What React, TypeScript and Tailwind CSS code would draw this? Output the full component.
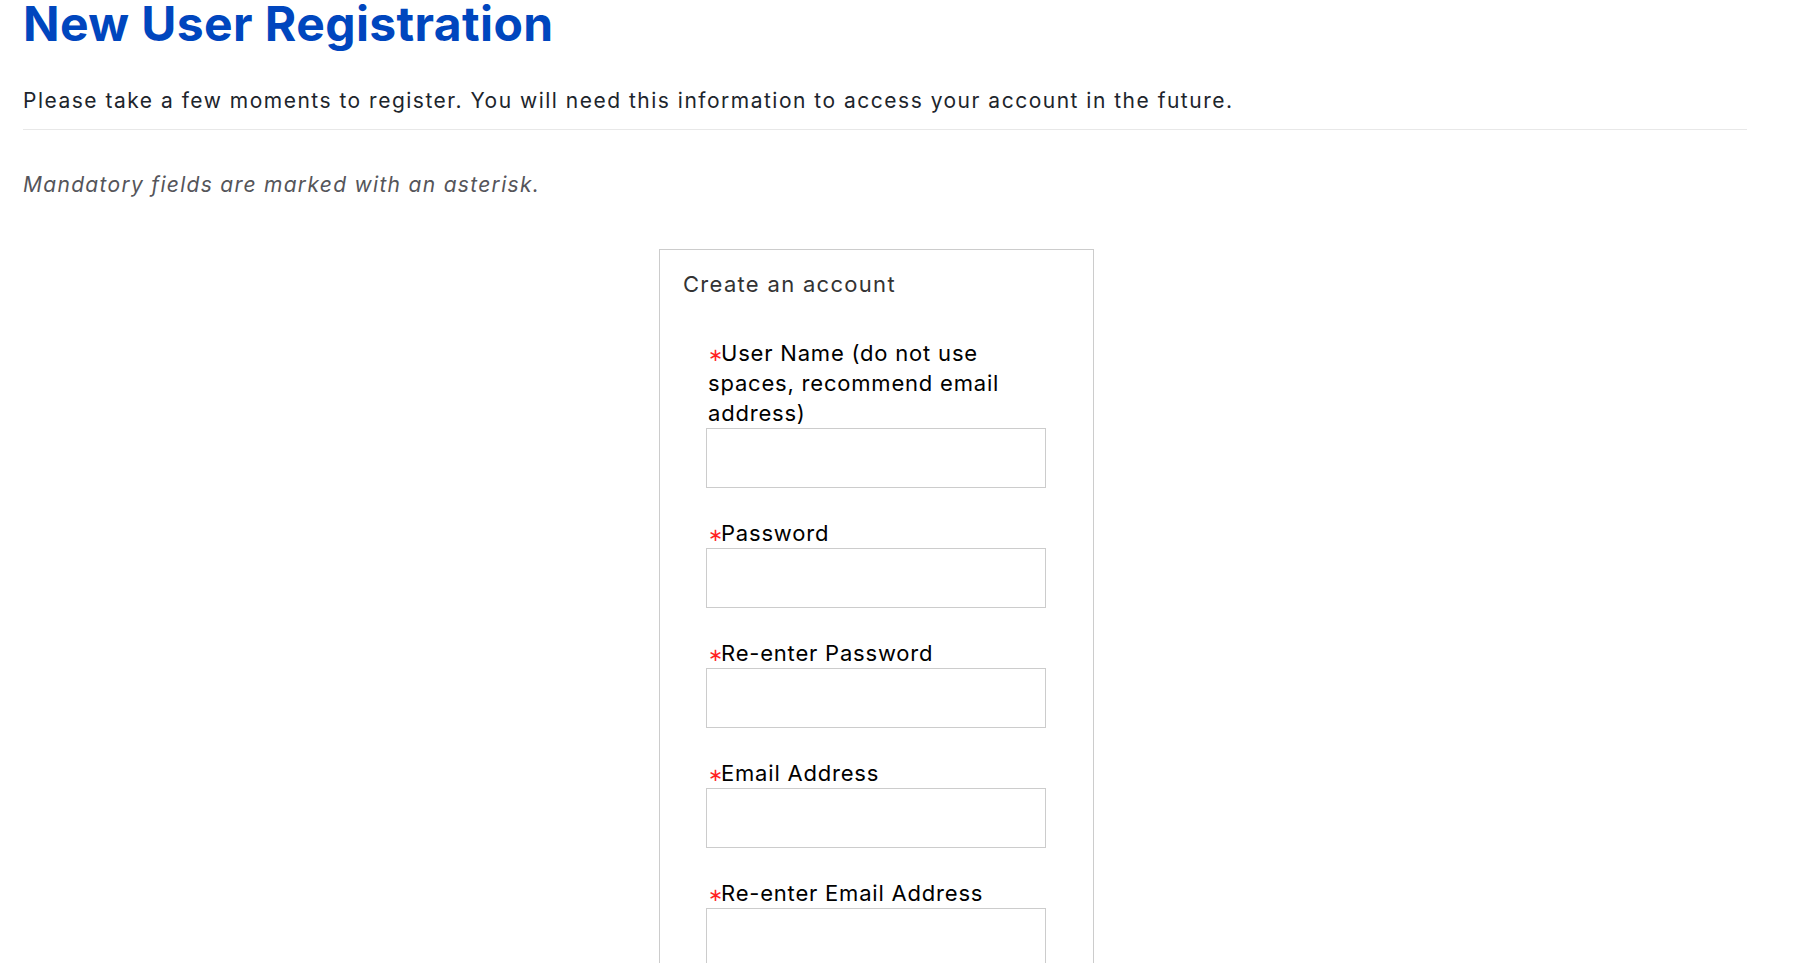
export default function App() {
  const fields = [
    { id: "username", label: "User Name (do not use spaces, recommend email address)", type: "text" },
    { id: "password", label: "Password", type: "password" },
    { id: "password2", label: "Re-enter Password", type: "password" },
    { id: "email", label: "Email Address", type: "email" },
    { id: "email2", label: "Re-enter Email Address", type: "email" },
  ];

  return (
    <div className="min-h-screen bg-white font-['Inter',sans-serif] text-[#1d252c]">
      <div className="pl-[23px] pr-[52px]">
        <h1 className="text-[48px] leading-[48px] font-bold tracking-[0.4px] text-[#0046be]">
          New User Registration
        </h1>

        <p className="mt-[39px] pb-[14px] text-[21px] leading-[28px] tracking-[1.5px] border-b border-[#e8e8e8]">
          Please take a few moments to register. You will need this information to access your account in the future.
        </p>

        <p className="mt-[41px] text-[21px] leading-[28px] tracking-[1.3px] italic text-[#55555a]">
          Mandatory fields are marked with an asterisk.
        </p>

        {/* Registration box */}
        <div className="mt-[50px] ml-[636px] w-[435px] border border-[#cccccc] pt-[20px] pb-[40px]">
          <h2 className="pl-[23px] text-[22px] leading-[28px] tracking-[1.3px] text-[#333333]">Create an account</h2>

          <div className="mt-[40px] pl-[46px] pr-[47px] flex flex-col gap-[30px]">
            {fields.map((f) => (
              <div key={f.id} className="flex flex-col">
                <label htmlFor={f.id} className="pl-[2px] text-[22px] leading-[30px] tracking-[0.8px] text-black">
                  <span className="relative mr-[-2px] text-[18px] leading-none tracking-normal text-[#f22]">∗</span>
                  {f.label}
                </label>
                <input
                  id={f.id}
                  type={f.type}
                  className="h-[60px] w-full border border-[#cccccc] bg-white px-3 outline-none"
                />
              </div>
            ))}
          </div>
        </div>
      </div>
    </div>
  );
}
